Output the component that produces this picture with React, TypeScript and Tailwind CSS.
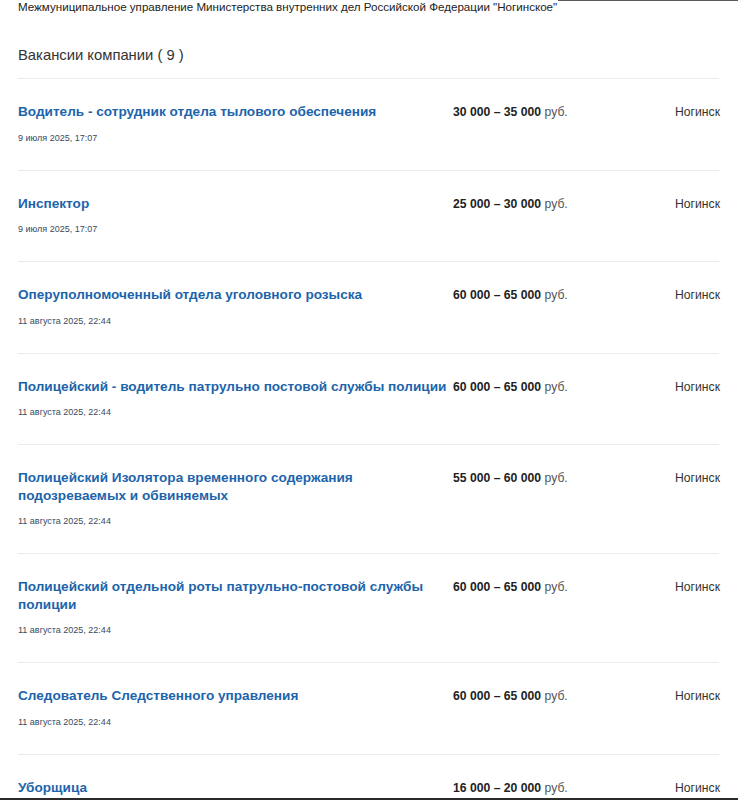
import React from "react";

type Job = { title: string; date: string; from: string; to: string };

const jobs: Job[] = [
  { title: "Водитель - сотрудник отдела тылового обеспечения", date: "9 июля 2025, 17:07", from: "30 000", to: "35 000" },
  { title: "Инспектор", date: "9 июля 2025, 17:07", from: "25 000", to: "30 000" },
  { title: "Оперуполномоченный отдела уголовного розыска", date: "11 августа 2025, 22:44", from: "60 000", to: "65 000" },
  { title: "Полицейский - водитель патрульно постовой службы полиции", date: "11 августа 2025, 22:44", from: "60 000", to: "65 000" },
  { title: "Полицейский Изолятора временного содержания подозреваемых и обвиняемых", date: "11 августа 2025, 22:44", from: "55 000", to: "60 000" },
  { title: "Полицейский отдельной роты патрульно-постовой службы полиции", date: "11 августа 2025, 22:44", from: "60 000", to: "65 000" },
  { title: "Следователь Следственного управления", date: "11 августа 2025, 22:44", from: "60 000", to: "65 000" },
  { title: "Уборщица", date: "11 августа 2025, 22:44", from: "16 000", to: "20 000" },
];

export default function App() {
  return (
    <div
      className="relative h-[800px] overflow-hidden bg-white border-b-2 border-[#2a2a2a]"
      style={{ fontFamily: '"Liberation Sans", Arial, sans-serif' }}
    >
      <div className="absolute top-0 left-[558px] right-0 h-px bg-[#5a5a5a]" />
      <div className="px-[18px]">
        <div className="text-[11.6px] leading-[14px] text-[#222] whitespace-nowrap">
          Межмуниципальное управление Министерства внутренних дел Российской Федерации "Ногинское"
        </div>
        <div className="mt-[32px] text-[14.8px] leading-[18px] text-[#333]">Вакансии компании ( 9 )</div>
        <div className="mt-[14px] mr-px">
          {jobs.map((j, i) => (
            <div
              key={i}
              className="grid grid-cols-[435px_1fr_auto] border-t border-[#e9ecef] pt-[24px] pb-[26px]"
            >
              <div>
                <div className="text-[13.6px] leading-[17.5px] font-bold text-[#1c64ab]">{j.title}</div>
                <div className="mt-[11px] text-[9px] leading-[12px] text-[#3b4a5c]">{j.date}</div>
              </div>
              <div className="text-[12.2px] leading-[18px] text-[#222] whitespace-nowrap">
                <span className="font-bold">
                  {j.from} – {j.to}
                </span>{" "}
                <span className="text-[#555]">руб.</span>
              </div>
              <div className="text-[12.2px] leading-[18px] text-[#333] -mr-px">Ногинск</div>
            </div>
          ))}
        </div>
      </div>
    </div>
  );
}
